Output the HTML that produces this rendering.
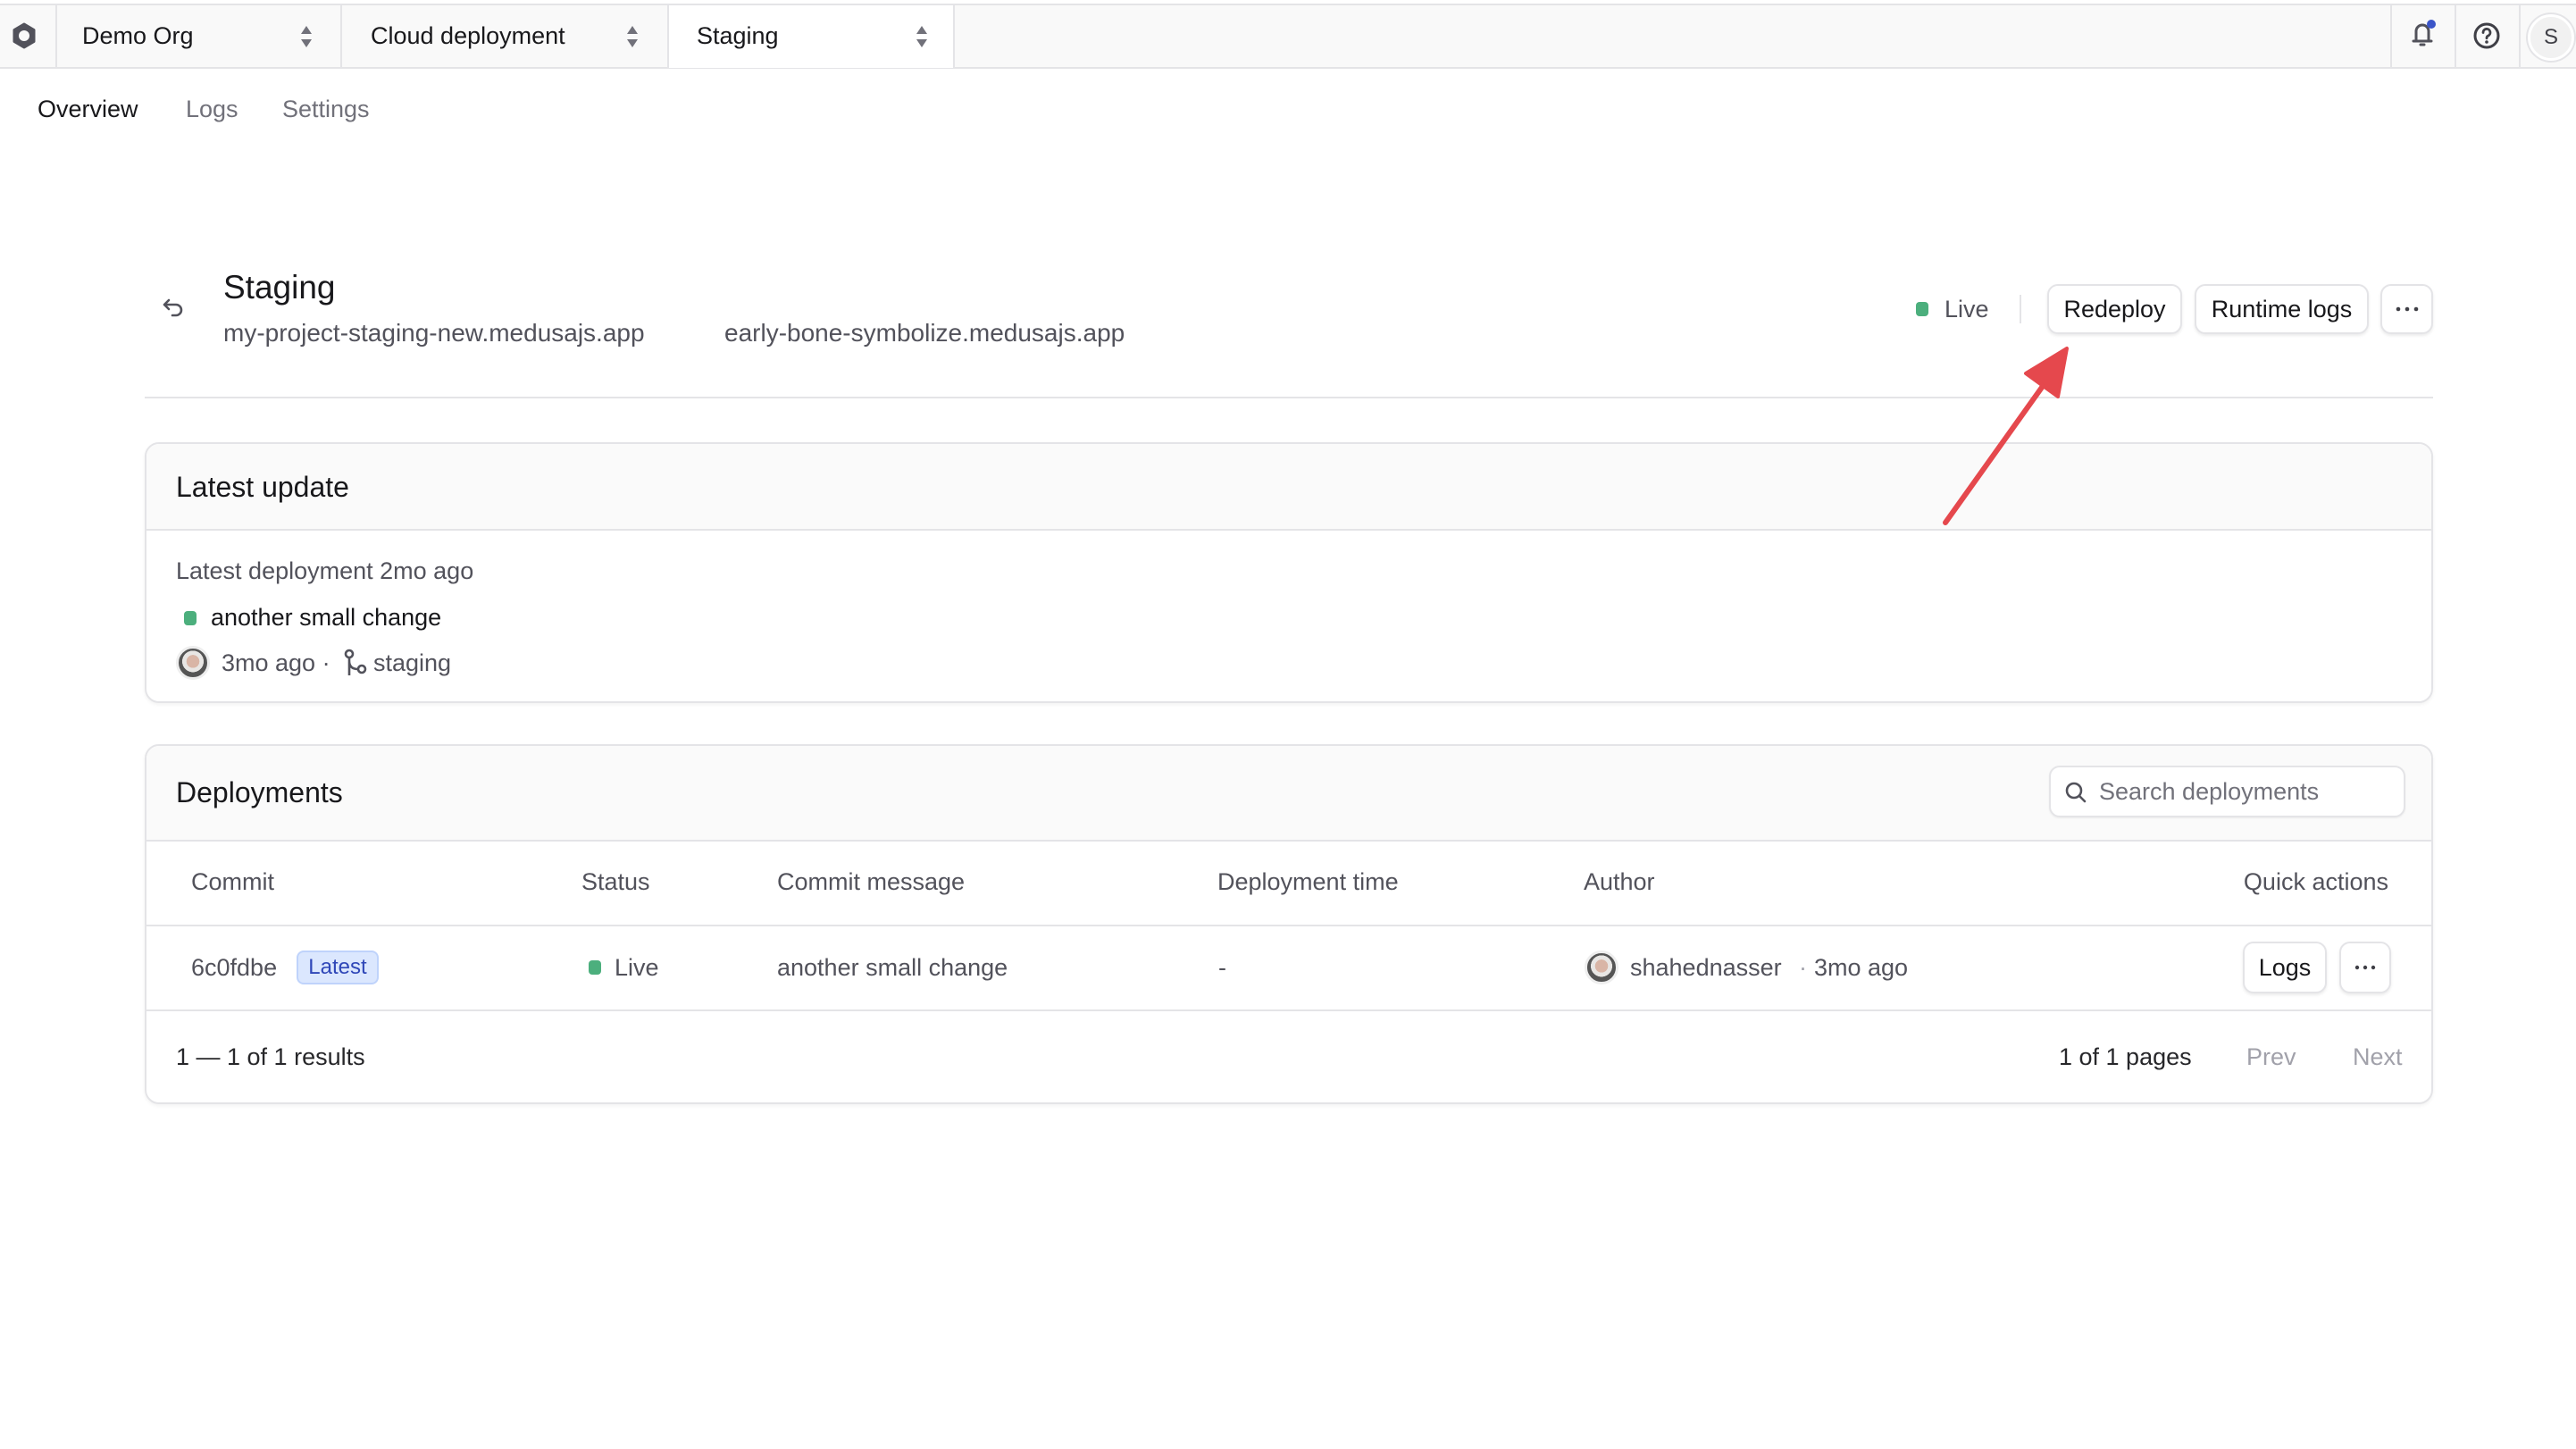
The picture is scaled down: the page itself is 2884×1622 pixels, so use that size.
<!DOCTYPE html>
<html><head><meta charset="utf-8">
<style>
*{margin:0;padding:0;box-sizing:border-box}
html,body{width:2884px;height:1622px;background:#fff;overflow:hidden}
body{position:relative;font-family:"Liberation Sans",sans-serif;color:#18181b;font-size:27px}
.a{position:absolute;white-space:nowrap;line-height:40px}
.g{color:#52525b}
.l{color:#a1a1aa}
.btn{position:absolute;border:2px solid #e4e4e7;border-radius:12px;background:#fff;box-shadow:0 2px 3px rgba(0,0,0,.08);display:flex;align-items:center;justify-content:center;font-size:27px;color:#18181b}
.dot{position:absolute;width:14px;height:16px;border-radius:4px;background:#4caf7d}
.card{position:absolute;left:162px;width:2562px;border:2px solid #e4e4e7;border-radius:16px;background:#fff;box-shadow:0 2px 4px rgba(0,0,0,.05);overflow:hidden}
.hd{position:absolute;left:0;right:0;top:0;background:#fafafa;border-bottom:2px solid #e4e4e7}
.vd{position:absolute;top:6px;height:70px;width:2px;background:#e4e4e7}
.av{position:absolute;width:38px;height:38px;border-radius:50%;border:3px solid #eee;background:radial-gradient(circle at 50% 45%,#d9b5a6 0 30%,#e8e6e4 31% 50%,#555 51%)}
</style></head><body>
<div style="position:absolute;left:0;top:4px;width:2884px;height:73px;background:#f9f9f9;border-bottom:2px solid #e4e4e7;border-top:2px solid #e4e4e7"></div>
<div style="position:absolute;left:748px;top:6px;width:320px;height:70px;background:#fff"></div>
<svg style="position:absolute;left:12px;top:25px" width="30" height="30" viewBox="0 0 30 30"><path d="M15 2 L26 8.5 V21.5 L15 28 L4 21.5 V8.5Z" fill="#52525b" stroke="#52525b" stroke-width="3" stroke-linejoin="round"/><circle cx="15" cy="15" r="6" fill="#f9f9f9"/></svg>
<div class="vd" style="left:62px"></div>
<div class="a" style="left:92px;top:20px">Demo Org</div>
<svg style="position:absolute;left:335px;top:27px" width="16" height="28" viewBox="0 0 16 28"><path d="M8 2 L14 11 H2Z M8 26 L14 17 H2Z" fill="#71717a"/></svg>
<div class="vd" style="left:381px"></div>
<div class="a" style="left:415px;top:20px">Cloud deployment</div>
<svg style="position:absolute;left:700px;top:27px" width="16" height="28" viewBox="0 0 16 28"><path d="M8 2 L14 11 H2Z M8 26 L14 17 H2Z" fill="#71717a"/></svg>
<div class="vd" style="left:747px"></div>
<div class="a" style="left:780px;top:20px">Staging</div>
<svg style="position:absolute;left:1024px;top:27px" width="16" height="28" viewBox="0 0 16 28"><path d="M8 2 L14 11 H2Z M8 26 L14 17 H2Z" fill="#71717a"/></svg>
<div class="vd" style="left:1067px"></div>
<div class="vd" style="left:2676px"></div>
<div class="vd" style="left:2748px"></div>
<div class="vd" style="left:2820px"></div>
<svg style="position:absolute;left:2696px;top:20px" width="34" height="36" viewBox="0 0 34 36"><path d="M6 26 H26 M9 26 V15 a7 7 0 0 1 14 0 V26 M14 30 h4" fill="none" stroke="#52525b" stroke-width="3" stroke-linecap="round"/><circle cx="26" cy="7" r="5" fill="#3b55c8"/></svg>
<svg style="position:absolute;left:2768px;top:24px" width="32" height="32" viewBox="0 0 32 32"><circle cx="16" cy="16" r="13" fill="none" stroke="#3f3f46" stroke-width="3"/><path d="M12 12.5 a4 4 0 1 1 5.5 3.6 c-1.2.6-1.5 1.3-1.5 2.6" fill="none" stroke="#3f3f46" stroke-width="2.8" stroke-linecap="round"/><circle cx="16" cy="23" r="1.8" fill="#3f3f46"/></svg>
<div style="position:absolute;left:2830px;top:16px;width:52px;height:52px;border-radius:50%;background:#f1f1f1;border:3px solid #fff;box-shadow:0 0 0 2px #e4e4e7;display:flex;align-items:center;justify-content:center;font-size:24px;color:#3f3f46">S</div>

<div class="a" style="left:42px;top:102px">Overview</div>
<div class="a" style="left:208px;top:102px;color:#71717a">Logs</div>
<div class="a" style="left:316px;top:102px;color:#71717a">Settings</div>

<svg style="position:absolute;left:180px;top:330px" width="30" height="30" viewBox="0 0 30 30"><path d="M9 6 L4 11 L9 16 M4 11 H17 a6 6 0 0 1 0 12 H13" fill="none" stroke="#52525b" stroke-width="2.6" stroke-linecap="round" stroke-linejoin="round"/></svg>
<div class="a" style="left:250px;top:300px;font-size:37px;line-height:44px">Staging</div>
<div class="a g" style="left:250px;top:353px;font-size:28px">my-project-staging-new.medusajs.app</div>
<div class="a g" style="left:811px;top:353px;font-size:28px">early-bone-symbolize.medusajs.app</div>
<div class="dot" style="left:2145px;top:338px"></div>
<div class="a g" style="left:2177px;top:326px">Live</div>
<div style="position:absolute;left:2261px;top:330px;width:2px;height:32px;background:#e4e4e7"></div>
<div class="btn" style="left:2292px;top:318px;width:151px;height:56px">Redeploy</div>
<div class="btn" style="left:2457px;top:318px;width:195px;height:56px">Runtime logs</div>
<div class="btn" style="left:2665px;top:318px;width:59px;height:56px"><svg width="26" height="6" viewBox="0 0 26 6"><circle cx="3" cy="3" r="2.3" fill="#3f3f46"/><circle cx="13" cy="3" r="2.3" fill="#3f3f46"/><circle cx="23" cy="3" r="2.3" fill="#3f3f46"/></svg></div>
<div style="position:absolute;left:162px;top:444px;width:2562px;height:2px;background:#e4e4e7"></div>

<div class="card" style="top:495px;height:292px">
 <div class="hd" style="height:97px"></div>
 <div class="a" style="left:33px;top:28px;font-size:32px">Latest update</div>
 <div class="a g" style="left:33px;top:122px">Latest deployment 2mo ago</div>
 <div class="dot" style="left:42px;top:187px"></div>
 <div class="a" style="left:72px;top:174px">another small change</div>
 <div class="av" style="left:33px;top:226px"></div>
 <div class="a g" style="left:84px;top:225px">3mo ago ·</div>
 <svg style="position:absolute;left:220px;top:229px" width="28" height="32" viewBox="0 0 28 32"><circle cx="7" cy="6" r="4" fill="none" stroke="#52525b" stroke-width="2.6"/><circle cx="21" cy="23" r="4" fill="none" stroke="#52525b" stroke-width="2.6"/><path d="M7 10 V30 M7 14 q0 9 10 9" fill="none" stroke="#52525b" stroke-width="2.6"/></svg>
 <div class="a g" style="left:254px;top:225px">staging</div>
</div>

<div class="card" style="top:833px;height:403px">
 <div class="hd" style="height:107px"></div>
 <div class="a" style="left:33px;top:32px;font-size:32px">Deployments</div>
 <div style="position:absolute;left:2130px;top:22px;width:399px;height:58px;border:2px solid #e4e4e7;border-radius:12px;background:#fff;box-shadow:0 1px 2px rgba(0,0,0,.06)"></div>
 <svg style="position:absolute;left:2146px;top:38px" width="28" height="28" viewBox="0 0 28 28"><circle cx="12" cy="12" r="8" fill="none" stroke="#52525b" stroke-width="2.6"/><path d="M18 18 L24 24" stroke="#52525b" stroke-width="2.6" stroke-linecap="round"/></svg>
 <div class="a" style="left:2186px;top:31px;color:#71717a">Search deployments</div>
 <div class="a g" style="left:50px;top:132px">Commit</div>
 <div class="a g" style="left:487px;top:132px">Status</div>
 <div class="a g" style="left:706px;top:132px">Commit message</div>
 <div class="a g" style="left:1199px;top:132px">Deployment time</div>
 <div class="a g" style="left:1609px;top:132px">Author</div>
 <div class="a g" style="right:48px;top:132px">Quick actions</div>
 <div style="position:absolute;left:0;right:0;top:200px;height:2px;background:#e4e4e7"></div>
 <div class="a g" style="left:50px;top:228px">6c0fdbe</div>
 <div style="position:absolute;left:168px;top:229px;width:92px;height:38px;border:2px solid #bfd3fb;background:#dbe7fe;border-radius:8px;color:#2f47b8;font-size:24px;display:flex;align-items:center;justify-content:center">Latest</div>
 <div class="dot" style="left:495px;top:240px"></div>
 <div class="a g" style="left:524px;top:228px">Live</div>
 <div class="a g" style="left:706px;top:228px">another small change</div>
 <div class="a g" style="left:1200px;top:228px">-</div>
 <div class="av" style="left:1610px;top:229px"></div>
 <div class="a g" style="left:1661px;top:228px">shahednasser</div>
 <div class="a l" style="left:1850px;top:228px">·</div>
 <div class="a g" style="left:1867px;top:228px">3mo ago</div>
 <div class="btn" style="left:2347px;top:219px;width:94px;height:58px">Logs</div>
 <div class="btn" style="left:2455px;top:219px;width:58px;height:58px"><svg width="24" height="6" viewBox="0 0 24 6"><circle cx="3" cy="3" r="2.2" fill="#3f3f46"/><circle cx="12" cy="3" r="2.2" fill="#3f3f46"/><circle cx="21" cy="3" r="2.2" fill="#3f3f46"/></svg></div>
 <div style="position:absolute;left:0;right:0;top:295px;height:2px;background:#e4e4e7"></div>
 <div class="a" style="left:33px;top:328px;color:#27272a">1 — 1 of 1 results</div>
 <div class="a" style="left:2141px;top:328px;color:#27272a">1 of 1 pages</div>
 <div class="a l" style="left:2351px;top:328px">Prev</div>
 <div class="a l" style="left:2470px;top:328px">Next</div>
</div>

<svg style="position:absolute;left:0;top:0" width="2884" height="1622"><path d="M2178 585 L2290 428" stroke="#e5484d" stroke-width="6" stroke-linecap="round"/><path d="M2314 390 L2304 444 L2268 418Z" fill="#e5484d" stroke="#e5484d" stroke-width="4" stroke-linejoin="round"/></svg>
</body></html>
